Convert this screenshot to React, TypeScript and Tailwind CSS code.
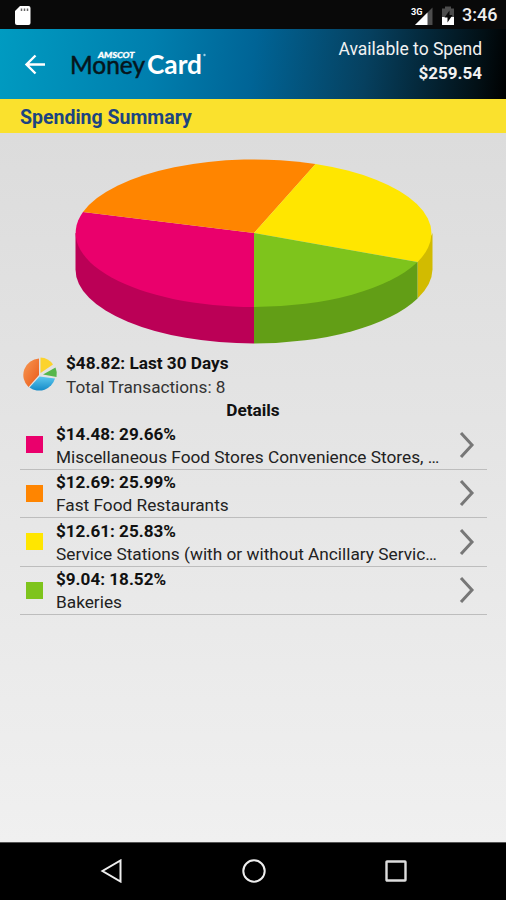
import React from 'react';

type Category = {
  amount: string;
  percent: string;
  label: string;
  swatch: string;
};

const categories: Category[] = [
  { amount: '$14.48', percent: '29.66%', label: 'Miscellaneous Food Stores Convenience Stores, …', swatch: 'bg-[#ea006c]' },
  { amount: '$12.69', percent: '25.99%', label: 'Fast Food Restaurants', swatch: 'bg-[#ff8500]' },
  { amount: '$12.61', percent: '25.83%', label: 'Service Stations (with or without Ancillary Servic…', swatch: 'bg-[#ffe600]' },
  { amount: '$9.04', percent: '18.52%', label: 'Bakeries', swatch: 'bg-[#7ec41c]' },
];

const StatusBar: React.FC = () => (
  <div className="flex h-[29px] items-center justify-between bg-[#090909] pl-[14px] pr-[9px]">
    <svg className="h-5 w-[18px]" viewBox="0 0 18 20">
      <path d="M6 1h8.5a2 2 0 0 1 2 2v15a2 2 0 0 1-2 2H3a2 2 0 0 1-2-2V6z" fill="#fff" />
      <path d="M7.5 3.500v2.500M10.500 3.500v2.500M13.500 3.500v2.500" stroke="#666" strokeWidth="1.500" />
    </svg>
    <div className="flex items-center">
      <svg className="h-[20px] w-[52px]" viewBox="410 4 52 20">
        <path d="M432.500 6.500V24H415z" fill="#4d4d4d" />
        <path d="M427.500 11.500V24H415z" fill="#fff" />
        <text x="411" y="13.500" fill="#fff" fontSize="9.500" fontWeight="700" textLength="11.500" lengthAdjust="spacingAndGlyphs">3G</text>
        <path d="M442 7.500h3v-2h6v2h3V24h-12z" fill="#4d4d4d" />
        <path d="M442 16h12v8h-12z" fill="#fff" />
        <path d="M449.500 9.500l-5 7h3v5l5-7.500h-3z" fill="#090909" />
      </svg>
      <span className="w-[35px] text-right text-[18px] font-medium leading-[32px] whitespace-nowrap text-[#eee]">3:46</span>
    </div>
  </div>
);

const Header: React.FC = () => (
  <div className="flex h-[70px] justify-between bg-[linear-gradient(97deg,#009bc1_0%,#007fae_30%,#006496_50%,#06405f_72%,#021016_94%,#000_100%)] pr-6">
    <svg className="h-[70px] w-[215px]" viewBox="0 29 215 70">
      <path d="M45 64.500H27M35.500 55.500l-9 9 9 9" fill="none" stroke="#fff" strokeWidth="2.400" />
      <text x="98" y="57.500" className="font-['Lato']" fill="#fff" stroke="#fff" strokeWidth="0.300" fontSize="7.500" fontWeight="900" fontStyle="italic" textLength="36.500" lengthAdjust="spacingAndGlyphs">AMSCOT</text>
      <text x="70" y="74" className="font-['Lato']" fill="#06151c" stroke="#06151c" strokeWidth="0.500" fontSize="25" textLength="75" lengthAdjust="spacingAndGlyphs">Money</text>
      <text x="147" y="74" className="font-['Lato']" fill="#fff" fontSize="27" fontWeight="700" textLength="55" lengthAdjust="spacingAndGlyphs">Card</text>
      <circle cx="204.500" cy="55" r="1.200" fill="#9cd0e4" />
    </svg>
    <div className="pt-2 text-right text-[#f2f2f2]">
      <div className="text-[17.500px] leading-6">Available to Spend</div>
      <div className="text-[17px] font-bold leading-6">$259.54</div>
    </div>
  </div>
);

// center 254,233 / radii 178.5x74 / depth 36.5
const SpendingPie: React.FC = () => (
  <svg className="block h-[218px] w-full" viewBox="0 133 506 218">
    <path d="M75.500 233V269.500A178.500 74 0 0 0 254 343.500V306.500z" fill="#bb0056" />
    <path d="M432.500 233V269.500A178.500 74 0 0 1 417.500 298.500V262z" fill="#d2bb00" />
    <path d="M254 306V343.500A178.500 74 0 0 0 417.500 298.500V262z" fill="#629e16" />
    <path d="M254 233L83 212A178.500 74 0 0 0 254 307z" fill="#ea006c" />
    <path d="M254 233L315.500 164A178.500 74 0 0 0 83 212z" fill="#ff8500" />
    <path d="M254 233L417.500 262A178.500 74 0 0 0 315.500 164z" fill="#ffe600" />
    <path d="M254 233V307A178.500 74 0 0 0 417.500 262z" fill="#7ec41c" />
  </svg>
);

const PieIcon: React.FC = () => (
  <svg className="h-9 w-9" viewBox="0 0 36 36">
    <defs>
      <linearGradient id="orangeSlice" x1="0" y1="0" x2="1" y2="1">
        <stop offset="0" stopColor="#f79a54" />
        <stop offset="1" stopColor="#ea5818" />
      </linearGradient>
      <linearGradient id="blueSlice" x1="0" y1="0" x2="0" y2="1">
        <stop offset="0" stopColor="#5cc7ee" />
        <stop offset="1" stopColor="#158bc8" />
      </linearGradient>
    </defs>
    <path d="M17 19V2.500A16.500 16.500 0 0 0 6.500 31z" fill="url(#orangeSlice)" />
    <path d="M17.500 20.500L7.500 31.500A16.500 16.500 0 0 0 33 22.500z" fill="url(#blueSlice)" />
    <path d="M18.500 17V1.500A16 16 0 0 1 31 8.500z" fill="#fcd32d" />
    <path d="M21 18.500L33.500 11.500A16 16 0 0 1 34.500 21z" fill="#56b64b" />
  </svg>
);

const CategoryRow: React.FC<{ item: Category }> = ({ item }) => (
  <div className="flex h-[48.5px] items-center border-b border-[#bdbdbd]">
    <div className={`ml-[6px] h-[17px] w-[17px] shrink-0 ${item.swatch}`} />
    <div className="ml-[13px] flex-1 whitespace-nowrap pt-[2px] text-[17.25px] leading-[23px]">
      <div className="text-[17.1px] font-bold">{item.amount}: {item.percent}</div>
      <div className="text-[#222]">{item.label}</div>
    </div>
    <svg className="mr-3 h-[26px] w-4 shrink-0" viewBox="0 0 16 26">
      <path d="M2 1l11 12L2 25" fill="none" stroke="#777" strokeWidth="3" />
    </svg>
  </div>
);

const NavBar: React.FC = () => (
  <div className="flex h-[58px] items-center justify-center gap-[118px] border-t border-[#555] bg-black pb-[2px] pl-[2px]">
    <svg className="h-6 w-6" viewBox="0 0 24 24" fill="none" stroke="#eee" strokeWidth="2">
      <path d="M20.500 1.500v21L2.500 12z" />
    </svg>
    <svg className="h-6 w-6" viewBox="0 0 24 24" fill="none" stroke="#eee" strokeWidth="2">
      <circle cx="12" cy="12" r="10.700" />
    </svg>
    <svg className="h-6 w-6" viewBox="0 0 24 24" fill="none" stroke="#ddd" strokeWidth="2.400">
      <rect x="2.500" y="2.500" width="19" height="19" rx="0.500" />
    </svg>
  </div>
);

const App: React.FC = () => {
  return (
    <div className="flex h-[900px] w-[506px] flex-col overflow-hidden bg-black font-['Roboto',sans-serif] text-[#111]">
      <StatusBar />
      <Header />
      <div className="h-[34px] bg-[#fae12d] pl-5 text-[19.5px] font-bold leading-[37px] text-[#1c4480]">
        Spending Summary
      </div>
      <div className="flex-1 bg-linear-to-b from-[#dcdcdc] to-[#f0f0f0]">
        <SpendingPie />
        <div className="flex h-12 pl-[22px]">
          <div className="pt-[5px]">
            <PieIcon />
          </div>
          <div className="ml-2 whitespace-nowrap text-[17.2px] leading-6">
            <div className="font-bold">$48.82: Last 30 Days</div>
            <div className="text-[#333]">Total Transactions: 8</div>
          </div>
        </div>
        <div className="h-[22px] text-center text-[17.2px] font-bold leading-[23px]">Details</div>
        <div className="ml-5 mr-[19px]">
          {categories.map((item) => (
            <CategoryRow key={item.label} item={item} />
          ))}
        </div>
      </div>
      <NavBar />
    </div>
  );
};

export default App;
